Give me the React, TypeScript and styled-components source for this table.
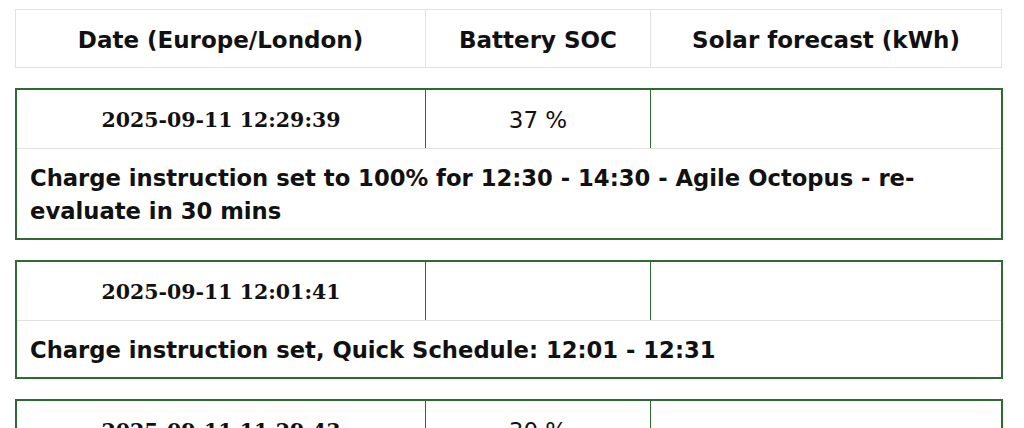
import React from "react";
import styled, { createGlobalStyle } from "styled-components";

const GREEN = "#2f6b31";
const LIGHT = "#e2e2e2";

const Global = createGlobalStyle`
  html, body { margin: 0; padding: 0; background: #ffffff; }
  body { font-family: "DejaVu Sans", Verdana, sans-serif; color: #111111; }
`;

const Page = styled.div`
  padding: 9px 0 0 15px;
  width: 988px;
`;

const HeaderTable = styled.div`
  display: grid;
  grid-template-columns: 409px 225px 1fr;
  border: 1px solid ${LIGHT};
  margin-right: 1px;
`;

const HeaderCell = styled.div<{ $first?: boolean }>`
  font-family: "DejaVu Sans", Verdana, sans-serif;
  font-weight: bold;
  font-size: 23px;
  line-height: 33px;
  height: 33px;
  padding: 14px 4px 10px;
  text-align: center;
  white-space: nowrap;
  border-left: ${(p) => (p.$first ? "none" : `1px solid ${LIGHT}`)};
`;

const Card = styled.div`
  margin-top: 20px;
  border: 2px solid ${GREEN};
`;

const TopRow = styled.div`
  display: grid;
  grid-template-columns: 408px 225px 1fr;
  border-bottom: 1px solid ${LIGHT};
`;

const DateCell = styled.div`
  font-family: "DejaVu Serif", Georgia, serif;
  font-weight: bold;
  font-size: 20.5px;
  line-height: 33px;
  height: 33px;
  padding: 14px 8px 11px;
  text-align: center;
`;

const ValueCell = styled.div`
  font-family: "DejaVu Sans", Verdana, sans-serif;
  font-size: 23px;
  line-height: 33px;
  height: 33px;
  padding: 14px 8px 11px;
  text-align: center;
  border-left: 1px solid ${GREEN};
`;

const Message = styled.div`
  font-family: "DejaVu Sans", Verdana, sans-serif;
  font-weight: bold;
  font-size: 22.7px;
  line-height: 33px;
  padding: 13px 13px 10px;
`;

type Entry = { date: string; soc: string; solar: string; message: string };

const entries: Entry[] = [
  {
    date: "2025-09-11 12:29:39",
    soc: "37 %",
    solar: "",
    message:
      "Charge instruction set to 100% for 12:30 - 14:30 - Agile Octopus - re-evaluate in 30 mins",
  },
  {
    date: "2025-09-11 12:01:41",
    soc: "",
    solar: "",
    message: "Charge instruction set, Quick Schedule: 12:01 - 12:31",
  },
  {
    date: "2025-09-11 11:29:43",
    soc: "30 %",
    solar: "",
    message:
      "Charge instruction set to 100% for 11:30 - 12:00 - Agile Octopus - re-evaluate in 30 mins",
  },
];

export default function App() {
  return (
    <>
      <Global />
      <Page>
        <HeaderTable>
          <HeaderCell $first>Date (Europe/London)</HeaderCell>
          <HeaderCell>Battery SOC</HeaderCell>
          <HeaderCell>Solar forecast (kWh)</HeaderCell>
        </HeaderTable>
        {entries.map((e) => (
          <Card key={e.date}>
            <TopRow>
              <DateCell>{e.date}</DateCell>
              <ValueCell>{e.soc || "\u00a0"}</ValueCell>
              <ValueCell>{e.solar || "\u00a0"}</ValueCell>
            </TopRow>
            <Message>{e.message}</Message>
          </Card>
        ))}
      </Page>
    </>
  );
}
